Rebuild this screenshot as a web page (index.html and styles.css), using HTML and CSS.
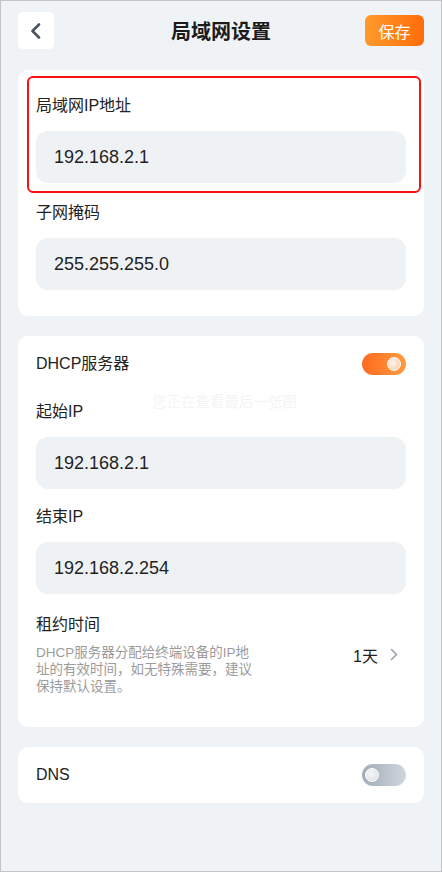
FILE: index.html
```html
<!DOCTYPE html>
<html lang="zh-CN">
<head>
  <meta charset="UTF-8" />
  <meta name="viewport" content="width=device-width, initial-scale=1.0" />
  <title>局域网设置</title>
  <link rel="stylesheet" href="styles.css">
</head>
<body>
  <div class="screen">
    <header class="topbar">
      <button class="back-btn" type="button" aria-label="返回">
        <svg width="12" height="16" viewBox="0 0 12 16">
          <path d="M9 1.5 L2.5 8 L9 14.5" fill="none" stroke="#4b5260" stroke-width="2.6" stroke-linecap="round" stroke-linejoin="round"/>
        </svg>
      </button>
      <h1 class="title">局域网设置</h1>
      <button class="save-btn" type="button">保存</button>
    </header>

    <!-- LAN address -->
    <section class="card card-lan">
      <div class="highlight"></div>
      <div class="field">
        <label class="field-label">局域网IP地址</label>
        <div class="field-input">192.168.2.1</div>
      </div>
      <div class="field">
        <label class="field-label">子网掩码</label>
        <div class="field-input">255.255.255.0</div>
      </div>
    </section>

    <!-- DHCP -->
    <section class="card card-dhcp">
      <div class="switch-row">
        <span class="row-title">DHCP服务器</span>
        <span class="switch on"><span class="knob"></span></span>
      </div>
      <div class="toast">您正在查看最后一张图</div>
      <div class="field">
        <label class="field-label">起始IP</label>
        <div class="field-input">192.168.2.1</div>
      </div>
      <div class="field">
        <label class="field-label">结束IP</label>
        <div class="field-input">192.168.2.254</div>
      </div>
      <div class="lease-row">
        <div class="lease-text">
          <div class="row-title">租约时间</div>
          <p class="lease-desc">DHCP服务器分配给终端设备的IP地<br>址的有效时间，如无特殊需要，建议<br>保持默认设置。</p>
        </div>
        <div class="lease-value">
          <span>1天</span>
          <svg width="8" height="13" viewBox="0 0 8 13">
            <path d="M1.5 1.5 L6.5 6.5 L1.5 11.5" fill="none" stroke="#9aa1ac" stroke-width="1.6" stroke-linecap="round" stroke-linejoin="round"/>
          </svg>
        </div>
      </div>
    </section>

    <!-- DNS -->
    <section class="card card-dns">
      <div class="switch-row">
        <span class="row-title">DNS</span>
        <span class="switch off"><span class="knob"></span></span>
      </div>
    </section>
  </div>
</body>
</html>
```

FILE: styles.css
```css
* {
  box-sizing: border-box;
}

body {
  margin: 0;
  font-family: "Liberation Sans", "Noto Sans CJK SC", sans-serif;
  color: #222222;
  background: #f0f3f6;
}

.screen {
  height: 872px;
  border: 1px solid #c4c4c4;
  background: #f0f3f6;
  overflow: hidden;
}

.topbar {
  display: grid;
  grid-template-columns: 1fr auto 1fr;
  align-items: center;
  padding: 11px 17px 0;
  height: 48px;
}

.back-btn {
  width: 36px;
  height: 37px;
  border: none;
  border-radius: 5px;
  background: #ffffff;
  display: flex;
  align-items: center;
  justify-content: center;
  padding: 0;
}

.title {
  margin: 0;
  font-size: 20px;
  font-weight: 700;
  color: #1c1c1c;
}

.save-btn {
  justify-self: end;
  width: 59px;
  height: 31px;
  border: none;
  border-radius: 6px;
  background: linear-gradient(90deg, #ff9a2c, #ff6c08);
  color: #ffffff;
  font-family: inherit;
  font-size: 16px;
  padding: 0;
}

.card {
  position: relative;
  margin: 0 17px;
  background: #ffffff;
  border-radius: 10px;
  padding: 0 18px;
}

.card-lan {
  margin-top: 21px;
  padding-top: 25px;
  padding-bottom: 26px;
}

.card-dhcp {
  margin-top: 20px;
  padding-top: 17px;
  padding-bottom: 32px;
}

.card-dns {
  margin-top: 20px;
  padding-top: 17px;
  padding-bottom: 17px;
}

.highlight {
  position: absolute;
  left: 9px;
  top: 6px;
  width: 394px;
  height: 117px;
  border: 2px solid #ff1010;
  border-radius: 6px;
  pointer-events: none;
}

.field + .field {
  margin-top: 19px;
}

.card-dhcp .field {
  margin-top: 17px;
}

.card-dhcp .toast + .field {
  margin-top: 26px;
}

.field-label {
  display: block;
  font-size: 16px;
  line-height: 22px;
  margin-bottom: 14px;
}

.field-input {
  height: 52px;
  border-radius: 12px;
  background: #eff2f5;
  padding: 0 18px;
  display: flex;
  align-items: center;
  font-size: 18px;
  color: #1f1f1f;
}

.switch-row {
  display: flex;
  align-items: center;
  justify-content: space-between;
  height: 22px;
}

.row-title {
  font-size: 16px;
  line-height: 22px;
  color: #222222;
}

.switch {
  position: relative;
  width: 44px;
  height: 22px;
  border-radius: 11px;
}

.switch.on {
  background: linear-gradient(90deg, #ff6a1e, #ff9c42);
}

.switch.off {
  background: linear-gradient(90deg, #a2abb7, #cfd6de);
}

.knob {
  position: absolute;
  top: 4px;
  width: 14px;
  height: 14px;
  border-radius: 50%;
  border: 1.5px solid #ffffff;
}

.switch.on .knob {
  right: 5px;
  background: radial-gradient(circle at 40% 40%, #fff4ea, #f7c9a4);
}

.switch.off .knob {
  left: 3px;
  background: radial-gradient(circle at 40% 40%, #f5f6f8, #d9dde3);
}

.toast {
  position: absolute;
  left: 134px;
  top: 54px;
  font-size: 14.5px;
  color: #f4f4f4;
  white-space: nowrap;
}

.lease-row {
  display: flex;
  align-items: center;
  justify-content: space-between;
  margin-top: 20px;
}

.lease-desc {
  margin: 8px 0 0;
  font-size: 13.5px;
  line-height: 17px;
  color: #9b9b9b;
}

.lease-value {
  display: flex;
  align-items: center;
  gap: 12px;
  font-size: 16px;
  color: #222222;
  padding-right: 8px;
}
```
